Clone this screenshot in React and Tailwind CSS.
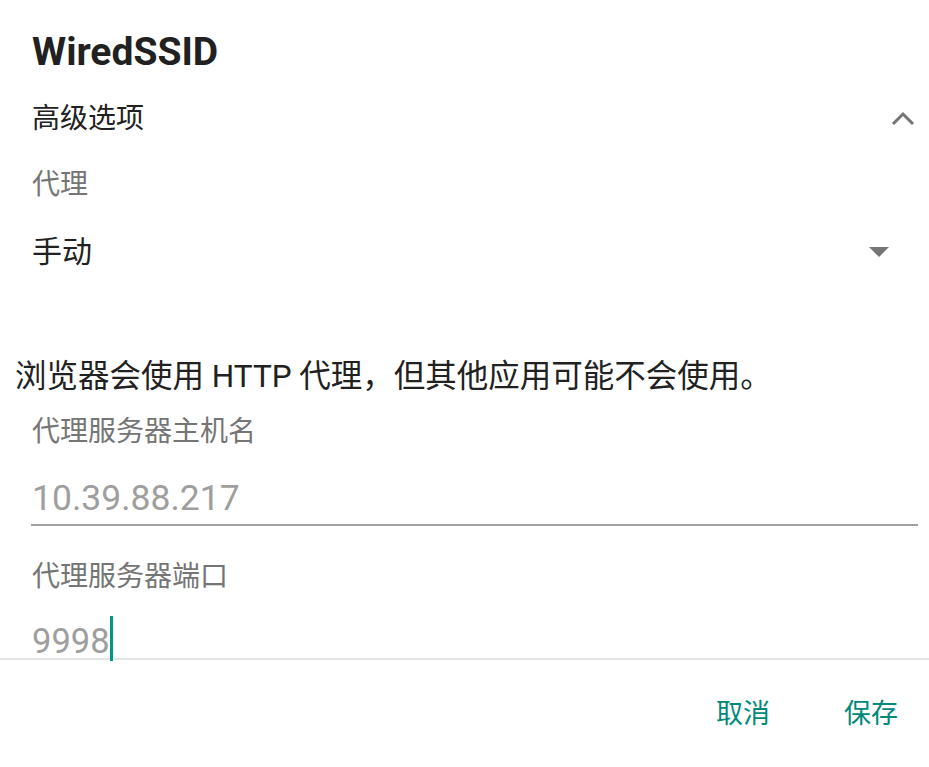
export default function App() {
  const font = { fontFamily: 'Roboto, "Noto Sans CJK SC", sans-serif' };
  return (
    <div style={font} className="w-[929px] h-[767px] bg-white flex flex-col overflow-hidden">
      <div className="h-[660px] flex flex-col border-b-2 border-[#e4e4e4] shrink-0">
        <div className="mt-[28px] pl-[32px] text-[39px] leading-[48px] font-bold text-[#212121]">WiredSSID</div>

        <div className="mt-[23px] h-[40px] flex items-center justify-between pl-[32px] pr-[14px]">
          <span className="text-[28px] leading-[40px] text-[#212121]">高级选项</span>
          <svg width="24" height="15" viewBox="0 0 24 15" className="mt-[-2px]">
            <path d="M2 13 L12 3 L22 13" fill="none" stroke="#757575" strokeWidth="3" />
          </svg>
        </div>

        <div className="mt-[26px] pl-[32px] text-[28px] leading-[40px] text-[#757575]">代理</div>

        <div className="mt-[27px] h-[40px] flex items-center justify-between pl-[32px] pr-[40px]">
          <span className="text-[30px] leading-[40px] text-[#212121]">手动</span>
          <svg width="20" height="10" viewBox="0 0 20 10" className="mt-[-1px]">
            <path d="M0 0 L20 0 L10 10 Z" fill="#757575" />
          </svg>
        </div>

        <div className="mt-[83px] pl-[15px] text-[31.5px] leading-[44px] text-[#212121] whitespace-nowrap">
          浏览器会使用 HTTP 代理，但其他应用可能不会使用。
        </div>

        <div className="mt-[13px] pl-[32px] text-[28px] leading-[40px] text-[#757575]">代理服务器主机名</div>

        <div className="mt-[22px] ml-[31px] mr-[11px] border-b-2 border-[#a0a0a0] pb-[2px]">
          <div className="pl-[1px] text-[35.5px] leading-[48px] text-[#9e9e9e]">10.39.88.217</div>
        </div>

        <div className="mt-[31px] pl-[32px] text-[28px] leading-[40px] text-[#757575]">代理服务器端口</div>

        <div className="mt-[27px] pl-[32px] flex items-start">
          <span className="text-[34.5px] leading-[34px] text-[#9e9e9e]">9998</span>
          <span className="w-[3px] h-[45px] bg-[#009688] mt-[-8px] shrink-0"></span>
        </div>
      </div>

      <div className="flex justify-end items-center gap-[74px] pr-[31px] h-[116px] text-[27px] text-[#00897b]">
        <span className="leading-[40px]">取消</span>
        <span className="leading-[40px]">保存</span>
      </div>
    </div>
  );
}
